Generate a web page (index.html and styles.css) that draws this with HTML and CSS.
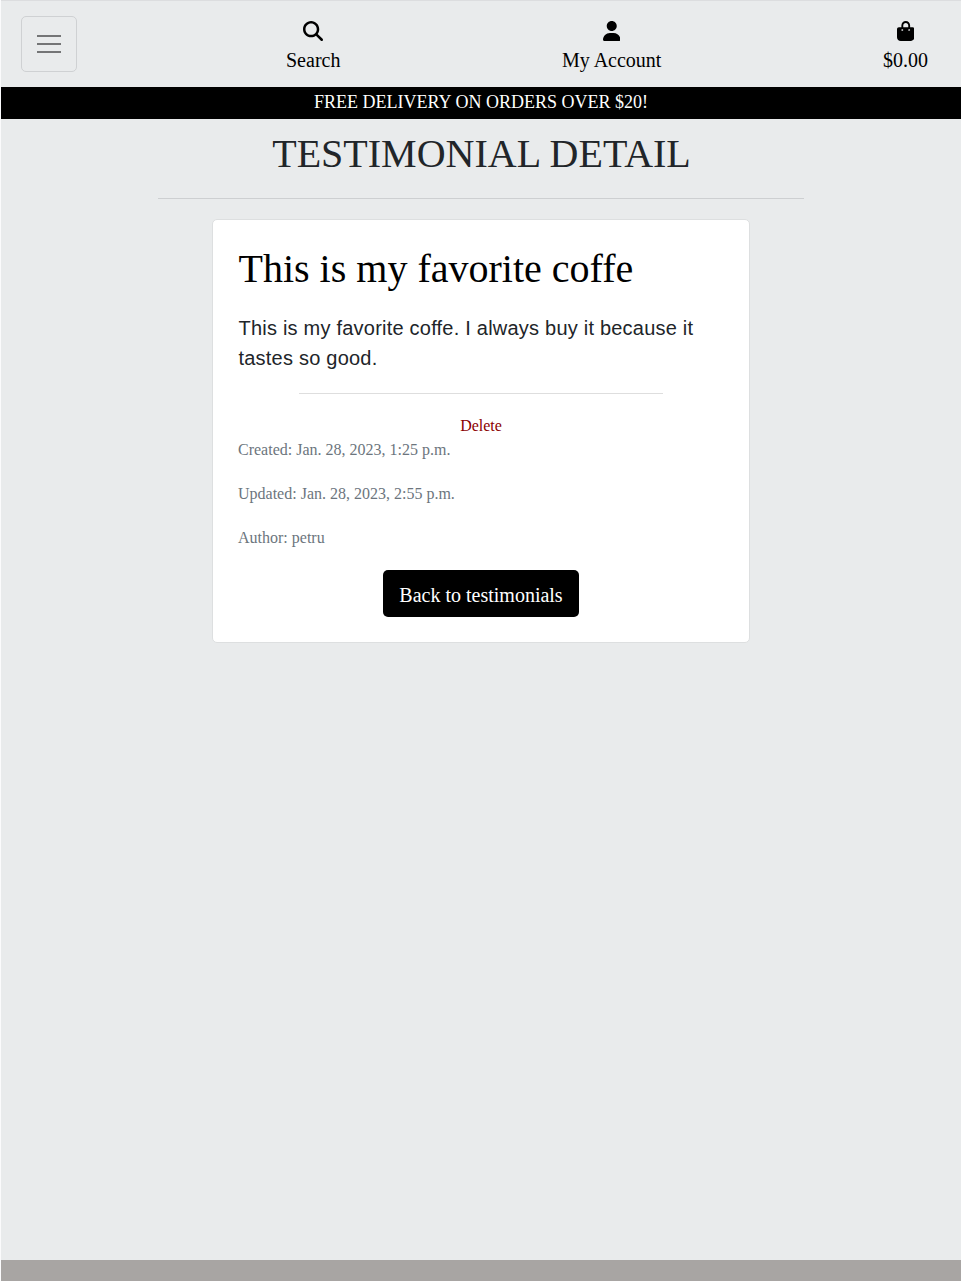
FILE: index.html
```html
<!DOCTYPE html>
<html lang="en">
<head>
<meta charset="utf-8">
<title>Testimonial Detail</title>
<link rel="stylesheet" href="styles.css">
</head>
<body>
<div class="page">
  <header class="topbar">
    <button class="toggler" aria-label="Toggle navigation">
      <svg width="30" height="30" viewBox="0 0 30 30"><path stroke="#000" stroke-opacity=".5" stroke-width="2" stroke-linecap="butt" d="M3 7h24M3 15h24M3 23h24"/></svg>
    </button>
    <nav class="links">
      <a class="link" href="#">
        <svg width="20" height="20" viewBox="0 0 512 512"><path d="M416 208c0 45.900-14.900 88.300-40 122.700L502.600 457.400c12.500 12.500 12.500 32.800 0 45.300s-32.800 12.500-45.300 0L330.700 376c-34.400 25.200-76.800 40-122.700 40C93.100 416 0 322.900 0 208S93.100 0 208 0S416 93.100 416 208zM208 352c79.500 0 144-64.500 144-144s-64.500-144-144-144S64 128.500 64 208s64.500 144 144 144z"/></svg>
        <span>Search</span>
      </a>
      <a class="link" href="#">
        <svg width="17.500" height="20" viewBox="0 0 448 512"><path d="M224 256c70.700 0 128-57.300 128-128S294.700 0 224 0S96 57.300 96 128s57.300 128 128 128zm-45.700 48C79.800 304 0 383.800 0 482.300C0 498.700 13.300 512 29.700 512H418.300c16.400 0 29.700-13.300 29.700-29.700C448 383.800 368.200 304 269.700 304H178.300z"/></svg>
        <span>My Account</span>
      </a>
      <a class="link" href="#">
        <svg width="17.500" height="20" viewBox="0 0 448 512"><path d="M160 112c0-35.300 28.700-64 64-64s64 28.700 64 64v48H160V112zm-48 48H48c-26.500 0-48 21.500-48 48V416c0 53 43 96 96 96H352c53 0 96-43 96-96V208c0-26.500-21.500-48-48-48H336V112C336 50.100 285.900 0 224 0S112 50.100 112 112v48zm24 96c-13.300 0-24-10.700-24-24s10.700-24 24-24s24 10.700 24 24s-10.700 24-24 24zm200-24c0 13.300-10.700 24-24 24s-24-10.700-24-24s10.700-24 24-24s24 10.700 24 24z"/></svg>
        <span>$0.00</span>
      </a>
    </nav>
  </header>
  <div class="banner"><span class="banner-text">FREE DELIVERY ON ORDERS OVER $20!</span></div>
  <main class="main">
    <h1 class="title">TESTIMONIAL DETAIL</h1>
    <hr class="title-rule">
    <article class="card">
      <h2 class="card-title">This is my favorite coffe</h2>
      <p class="card-text">This is my favorite coffe. I always buy it because it tastes so good.</p>
      <hr class="card-rule">
      <a class="delete" href="#">Delete</a>
      <div class="meta">
        <p>Created: Jan. 28, 2023, 1:25 p.m.</p>
        <p>Updated: Jan. 28, 2023, 2:55 p.m.</p>
        <p>Author: petru</p>
      </div>
      <a class="back" href="#">Back to testimonials</a>
    </article>
  </main>
  <footer class="footer"></footer>
</div>
</body>
</html>
```
FILE: styles.css
```css
* { box-sizing: border-box; }
body {
  margin: 0;
  background: #e9ebec;
  color: #212529;
  font-family: "Liberation Serif", "Times New Roman", serif;
  font-size: 16px;
  line-height: 1.5;
}
a { text-decoration: none; }
h1, h2, p { margin: 0; font-weight: 400; }
.page {
  height: 1281px;
  display: flex;
  flex-direction: column;
  border-left: 1px solid #fbfbfc;
}
.topbar {
  height: 87px;
  flex: none;
  display: flex;
  align-items: flex-start;
  padding: 15px 33px 0 20px;
  border-top: 1px solid #dcdddf;
}
.toggler {
  width: 56px;
  height: 56px;
  display: flex;
  align-items: center;
  justify-content: center;
  padding: 0;
  border: 1px solid #cfd1d3;
  border-radius: 5px;
  background: none;
}
.links {
  flex: 1;
  display: flex;
  justify-content: space-between;
  margin-left: 209px;
}
.link {
  display: flex;
  flex-direction: column;
  align-items: center;
  padding-top: 4.500px;
  color: #000;
  font-size: 20px;
}
.link span { line-height: 30px; margin-top: 4.500px; }
.link svg { display: block; }
.banner {
  height: 32px;
  flex: none;
  background: #000;
  color: #fff;
  text-align: center;
  font-size: 18px;
  line-height: 31px;
}
.main {
  flex: 1;
  display: flex;
  flex-direction: column;
  align-items: center;
}
.title {
  margin-top: 11px;
  padding-left: 1px;
  font-size: 40px;
  line-height: 48px;
}
.title-rule {
  width: 646px;
  height: 1px;
  margin: 20px 0 20px;
  border: 0;
  background: #cdcfd1;
}
.card {
  width: 538px;
  height: 424px;
  display: flex;
  flex-direction: column;
  align-items: center;
  padding: 25px;
  border: 1px solid #dddfe0;
  border-radius: 5px;
  background: #fff;
}
.card-title {
  align-self: stretch;
  padding-left: .5px;
  color: #000;
  font-size: 40px;
  line-height: 48px;
}
.card-text {
  align-self: stretch;
  margin-top: 20px;
  padding-left: .5px;
  font-family: "Liberation Sans", Arial, sans-serif;
  font-size: 20px;
  letter-spacing: .22px;
  line-height: 30px;
}
.card-rule {
  width: 364px;
  height: 1px;
  margin: 20px 0;
  border: 0;
  background: #dedede;
}
.delete { color: #8b0000; }
.meta {
  align-self: stretch;
  display: grid;
  gap: 20px;
  color: #6c757d;
}
.back {
  height: 47px;
  margin-top: 20px;
  padding: 10px 16px 7px;
  border-radius: 5px;
  background: #000;
  color: #fff;
  font-size: 20px;
  line-height: 30px;
}
.footer { height: 21px; flex: none; background: #a8a5a3; }
```
